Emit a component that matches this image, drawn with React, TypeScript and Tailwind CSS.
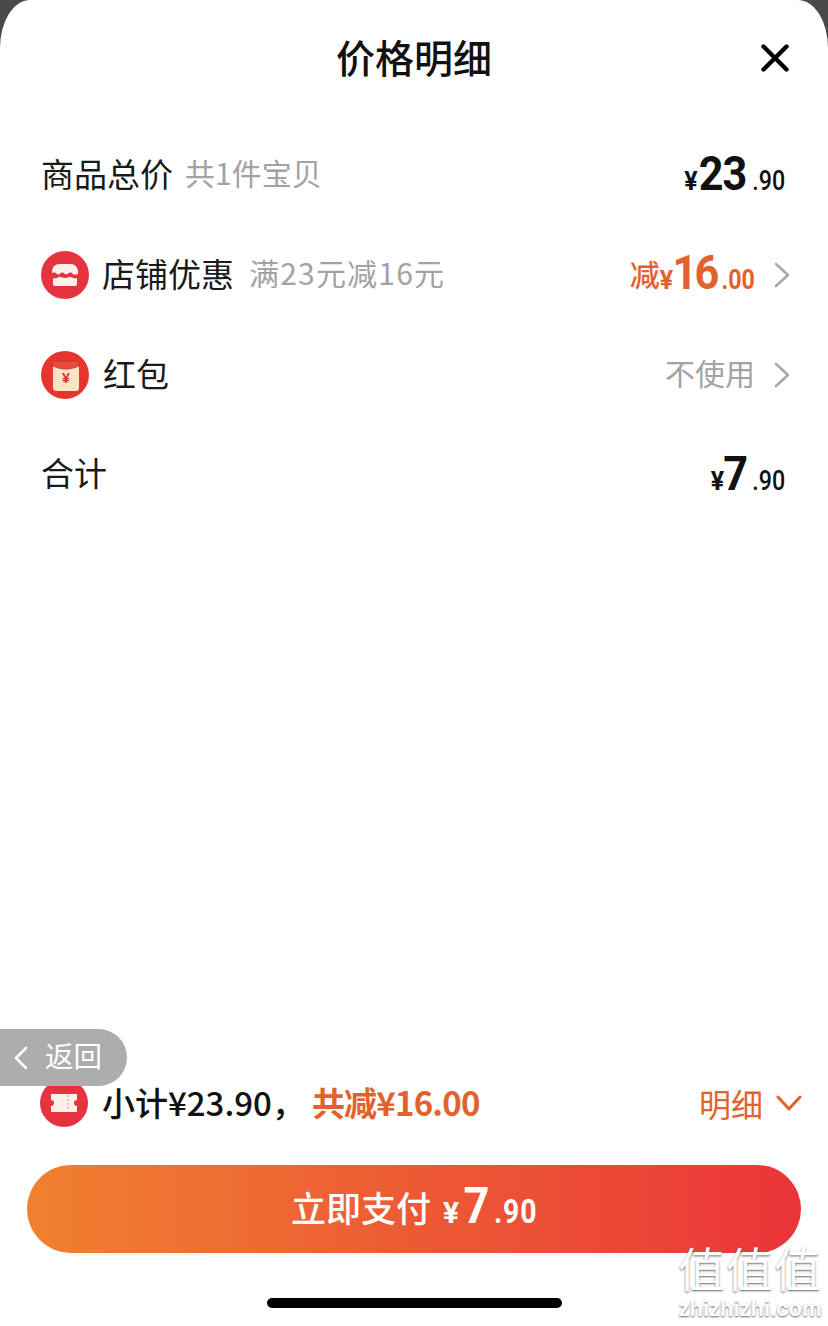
const cjk = "font-['Noto_Sans_CJK_SC',sans-serif]";
const din = "font-['Roboto',sans-serif]";

function Price({ whole, cents, className = "", wholeClass = "text-[48px] font-bold mx-[-2px] tracking-[-1px]", centsClass = "text-[27px] font-medium origin-right", yuanClass = "text-[25px] font-bold" }: {
  whole: string; cents: string; className?: string; wholeClass?: string; centsClass?: string; yuanClass?: string;
}) {
  return (
    <span className={`flex items-baseline ${din} ${className}`}>
      <span className={yuanClass}>¥</span>
      <span className={`inline-block leading-none scale-x-[0.9] ${wholeClass}`}>{whole}</span>
      <span className={`inline-block scale-x-[0.86] ${centsClass}`}>.{cents}</span>
    </span>
  );
}

function ChevronR() {
  return (
    <svg viewBox="0 0 16 26" className="w-[16px] h-[26px] ml-[19px]" fill="none" stroke="#a9a9a9" strokeWidth="2.6" strokeLinecap="round" strokeLinejoin="round">
      <path d="M2 2l12 11L2 24" />
    </svg>
  );
}

function ShopIcon() {
  return (
    <span className="w-[48px] h-[48px] rounded-full bg-[#e5343f] shrink-0">
      <svg viewBox="0 0 48 48" className="w-[48px] h-[48px]">
        <path d="M11 21c0-5 3-8 8-8h10c5 0 8 3 8 8v2c-2 1-4 1-5 0s-2-2-4-1-3 2-4 1-3-2-4-1-3 2-4 1-2-2-5-1z" fill="#fdf1ea" />
        <path d="M12 27c2 1 4 0 6-1s3 1 6 1 4-2 6-1 4 2 6 1v6c0 1-1 2-2 2H14c-1 0-2-1-2-2z" fill="#fdf1ea" />
      </svg>
    </span>
  );
}

function EnvelopeIcon() {
  return (
    <span className="w-[48px] h-[48px] rounded-full bg-[#e6352e] shrink-0">
      <svg viewBox="0 0 48 48" className="w-[48px] h-[48px]">
        <rect x="12" y="10" width="26" height="30" rx="3" fill="#fbe3c6" />
        <path d="M12 13c0-2 1-3 3-3h20c2 0 3 1 3 3v2c-8 4-18 4-26 0z" fill="#ec4a3c" stroke="#b5302a" strokeWidth="0.8" />
        <text x="25" y="32" textAnchor="middle" fontSize="14" fontWeight="700" fill="#c9352b" fontFamily="Liberation Sans">¥</text>
      </svg>
    </span>
  );
}

function TicketIcon() {
  return (
    <span className="w-[48px] h-[48px] rounded-full bg-[#e5343f] shrink-0">
      <svg viewBox="0 0 48 48" className="w-[48px] h-[48px]">
        <path d="M11 15h26v6a3 3 0 0 0 0 6v6H11v-6a3 3 0 0 0 0-6z" fill="#fdf1ea" />
        <path d="M28 16v16" stroke="#e9b5aa" strokeWidth="1.5" strokeDasharray="2 2" />
      </svg>
    </span>
  );
}

export default function App() {
  return (
    <div className={`relative h-[1326px] w-[828px] overflow-hidden bg-[#4a4a4a] ${cjk}`}>
      <div className="h-full bg-white rounded-tl-[30px_48px] rounded-tr-[30px_48px] flex flex-col">
        {/* header */}
        <div className="h-[124px] flex items-start justify-center relative shrink-0">
          <h1 className="text-[39px] leading-none font-medium text-[#111] mt-[37px]">价格明细</h1>
          <svg viewBox="0 0 28 28" className="absolute left-[761px] top-[44px] w-[28px] h-[28px]" fill="none" stroke="#000" strokeWidth="4.4" strokeLinecap="round">
            <path d="M2.5 2.5l23 23M25.5 2.5l-23 23" />
          </svg>
        </div>

        {/* rows */}
        <div className="flex items-center justify-between h-[100px] pl-[41px] pr-[43px]">
          <div className="flex items-center">
            <span className="text-[33px] text-[#1a1a1a] pb-[1px]">商品总价</span>
            <span className="text-[30px] text-[#a3a3a3] ml-[12px] pb-[4px]">共1件宝贝</span>
          </div>
          <Price whole="23" cents="90" className="text-[#111] pt-[4px]" />
        </div>

        <div className="flex items-center justify-between h-[100px] pl-[41px] pr-[38px] pt-[2px]">
          <div className="flex items-center">
            <ShopIcon />
            <span className="text-[33px] text-[#1a1a1a] ml-[13px] pb-[3px]">店铺优惠</span>
            <span className="text-[30px] text-[#a3a3a3] ml-[15px] pb-[6px] tracking-[1.2px]">满23元减16元</span>
          </div>
          <div className="flex items-center">
            <span className="text-[30px] font-medium text-[#e2622d] pb-[4px]">减</span>
            <Price whole="16" cents="00" className="text-[#e2622d]" wholeClass="text-[48px] font-bold mx-[-3px] tracking-[-3px]" centsClass="text-[27px] font-bold origin-right" />
            <ChevronR />
          </div>
        </div>

        <div className="flex items-center justify-between h-[100px] pl-[41px] pr-[38px] pt-[2px]">
          <div className="flex items-center">
            <EnvelopeIcon />
            <span className="text-[33px] text-[#1a1a1a] ml-[14px] pb-[2px]">红包</span>
          </div>
          <div className="flex items-center">
            <span className="text-[30px] text-[#a3a3a3] pb-[6px]">不使用</span>
            <ChevronR />
          </div>
        </div>

        <div className="flex items-center justify-between h-[100px] pl-[41px] pr-[43px]">
          <span className="text-[33px] text-[#1a1a1a] pb-[2px]">合计</span>
          <Price whole="7" cents="90" className="text-[#111] pt-[3px]" />
        </div>

        <div className="flex-1" />

        {/* subtotal */}
        <div className="flex items-center justify-between pl-[40px] pr-[26px] h-[48px] mb-[38px]">
          <div className="flex items-center">
            <TicketIcon />
            <span className="text-[33px] font-medium text-[#111] ml-[14px]">小计¥23.90，</span>
            <span className="text-[33px] font-bold text-[#e2622d] ml-[7px] tracking-[-0.8px]">共减¥16.00</span>
          </div>
          <div className="flex items-center">
            <span className="text-[32px] text-[#e2622d]">明细</span>
            <svg viewBox="0 0 26 16" className="w-[26px] h-[16px] ml-[13px]" fill="none" stroke="#e2622d" strokeWidth="3" strokeLinecap="round" strokeLinejoin="round">
              <path d="M2 2l11 12L24 2" />
            </svg>
          </div>
        </div>

        {/* pay button */}
        <div className="mx-[27px] h-[88px] pl-[7px] rounded-full bg-gradient-to-r from-[#f08030] via-[#ec5a34] via-50% to-[#ea3338] flex items-center justify-center text-white shrink-0">
          <span className="text-[35px] font-medium pb-[3px]">立即支付</span>
          <Price whole="7" cents="90" className="ml-[12px]" yuanClass="text-[30px] font-bold" wholeClass="text-[50px] font-bold mx-[3px]" centsClass="text-[33px] font-bold tracking-[1px] origin-left" />
        </div>

        {/* home bar */}
        <div className="h-[73px] flex items-start justify-center pt-[45px] shrink-0">
          <div className="w-[295px] h-[10px] rounded-full bg-black" />
        </div>
      </div>

      {/* back pill */}
      <div className="absolute left-0 top-[1029px] w-[127px] h-[57px] rounded-r-full bg-[#adadad] flex items-center text-white">
        <svg viewBox="0 0 16 24" className="w-[16px] h-[24px] ml-[13px]" fill="none" stroke="#fff" strokeWidth="2.6" strokeLinecap="round" strokeLinejoin="round">
          <path d="M13 2L3 12l10 10" />
        </svg>
        <span className="text-[28.5px] ml-[16px] pb-[4px]">返回</span>
      </div>

      {/* watermark */}
      <div className="absolute left-[678px] top-[1244px] w-[144px] flex flex-col items-center text-white [text-shadow:0_1px_2px_rgba(0,0,0,0.6)]">
        <span className="text-[47px] leading-[54px] tracking-[1px] font-['Liberation_Sans','Noto_Sans_CJK_SC',sans-serif]">值值值</span>
        <span className="text-[22px] leading-[22px] font-['Liberation_Sans',sans-serif] font-bold">zhizhizhi.com</span>
      </div>
    </div>
  );
}
